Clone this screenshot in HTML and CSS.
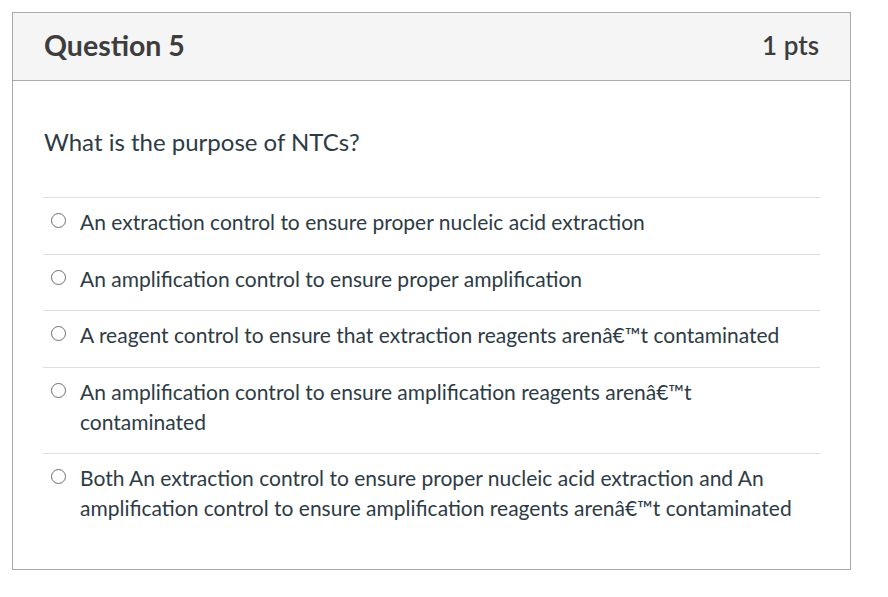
FILE: index.html
```html
<!DOCTYPE html>
<html>
<head>
<meta charset="utf-8">
<link rel="stylesheet" href="styles.css">
</head>
<body>
<div class="card">
  <div class="header">
    <h2 class="title">Question 5</h2>
    <span class="pts">1 pts</span>
  </div>
  <div class="content">
    <p class="question">What is the purpose of NTCs?</p>
    <div class="answers">
      <div class="answer"><span class="radio"></span><span class="label">An extraction control to ensure proper nucleic acid extraction</span></div>
      <div class="answer"><span class="radio"></span><span class="label">An amplification control to ensure proper amplification</span></div>
      <div class="answer"><span class="radio"></span><span class="label">A reagent control to ensure that extraction reagents arenâ€™t contaminated</span></div>
      <div class="answer"><span class="radio"></span><span class="label">An amplification control to ensure amplification reagents arenâ€™t contaminated</span></div>
      <div class="answer"><span class="radio"></span><span class="label">Both An extraction control to ensure proper nucleic acid extraction and An amplification control to ensure amplification reagents arenâ€™t contaminated</span></div>
    </div>
  </div>
</div>
</body>
</html>
```
FILE: styles.css
```css
html, body {
  margin: 0;
  padding: 0;
  background: #fff;
}
body {
  padding: 12px;
  font-family: Lato, "Open Sans", sans-serif;
  color: #2d3b45;
}
.card {
  width: 837px;
  border: 1px solid #aaaaaa;
  box-sizing: content-box;
}
.header {
  background: #f5f5f5;
  border-bottom: 1px solid #aaaaaa;
  height: 67px;
  display: flex;
  align-items: center;
  justify-content: space-between;
  padding: 0 31px 0 31px;
}
.title {
  margin: 0 0 3px 0;
  font-size: 28.5px;
  line-height: 32px;
  font-weight: 700;
  color: #3d3d3d;
}
.pts {
  margin-bottom: 3px;
  font-size: 26px;
  line-height: 32px;
  font-weight: 600;
  color: #3d3d3d;
}
.content {
  padding: 0 30px 0 30px;
  height: 488px;
}
.question {
  margin: 0;
  padding: 47px 0 0 1px;
  height: 69px;
  font-size: 24px;
  line-height: 28px;
  color: #2d3b45;
}
.answers {
  border-top: 1px solid #dddddd;
}
.answer {
  display: flex;
  align-items: flex-start;
  padding: 9px 0 16.5px 0;
  border-bottom: 1px solid #dddddd;
  font-size: 21px;
  line-height: 30px;
  color: #2d3b45;
}
.answer:last-child {
  border-bottom: none;
}
.radio {
  flex: none;
  width: 13px;
  height: 13px;
  border: 1.5px solid #6e6e6e;
  border-radius: 50%;
  margin: 6px 14px 0 8px;
}
.label {
  flex: 1;
  padding-right: 15px;
}
```
